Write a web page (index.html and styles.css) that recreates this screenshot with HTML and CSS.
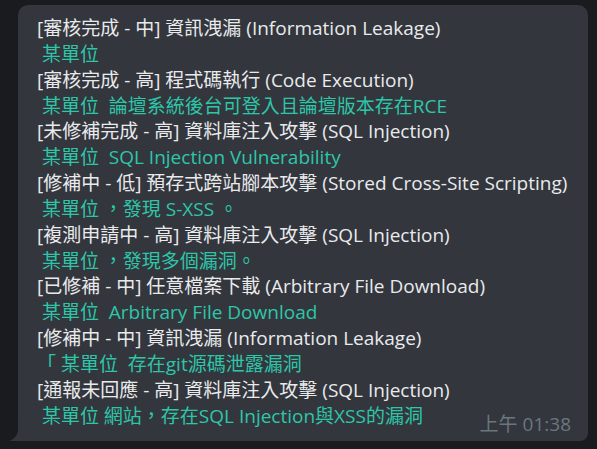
FILE: index.html
```html
<!DOCTYPE html>
<html lang="zh-Hant">
<head>
<meta charset="utf-8">
<link rel="stylesheet" href="styles.css">
</head>
<body>
<div class="chat">
  <div class="bubble">
    <div class="line">[審核完成 - 中] 資訊洩漏 (Information Leakage)</div>
    <div class="line org"> 某單位</div>
    <div class="line">[審核完成 - 高] 程式碼執行 (Code Execution)</div>
    <div class="line org"> 某單位  論壇系統後台可登入且論壇版本存在RCE</div>
    <div class="line">[未修補完成 - 高] 資料庫注入攻擊 (SQL Injection)</div>
    <div class="line org"> 某單位  SQL Injection Vulnerability</div>
    <div class="line">[修補中 - 低] 預存式跨站腳本攻擊 (Stored Cross-Site Scripting)</div>
    <div class="line org"> 某單位 ，發現 S-XSS 。</div>
    <div class="line">[複測申請中 - 高] 資料庫注入攻擊 (SQL Injection)</div>
    <div class="line org"> 某單位 ，發現多個漏洞。</div>
    <div class="line">[已修補 - 中] 任意檔案下載 (Arbitrary File Download)</div>
    <div class="line org"> 某單位  Arbitrary File Download</div>
    <div class="line">[修補中 - 中] 資訊洩漏 (Information Leakage)</div>
    <div class="line org">「 某單位  存在git源碼泄露漏洞</div>
    <div class="line">[通報未回應 - 高] 資料庫注入攻擊 (SQL Injection)</div>
    <div class="last">
      <div class="line org last-text"> 某單位 網站，存在SQL Injection與XSS的漏洞</div>
      <span class="time">上午 01:38</span>
    </div>
    <svg class="tail" width="10" height="18" viewBox="0 0 10 18"><path d="M10 0 Q10 15 0 18 L10 18 Z" fill="#33363d"/></svg>
  </div>
</div>
</body>
</html>
```
FILE: styles.css
```css
html, body {
  margin: 0;
  padding: 0;
  background: #1a1b1e;
}
body {
  font-family: "Open Sans", "Noto Sans CJK TC", sans-serif;
  font-size: 19px;
  color: #e9eaec;
}
.chat {
  padding: 5px 9px 0 18px;
}
.bubble {
  position: relative;
  width: 570px;
  box-sizing: border-box;
  background: #33363d;
  border-radius: 10px 10px 8px 0;
  padding: 11px 17px 4px 19px;
}
.line {
  line-height: 25.85px;
  height: 25.85px;
  white-space: pre;
}
.org {
  color: #2ec6a9;
}
.last {
  display: flex;
  justify-content: space-between;
  align-items: flex-end;
}
.last-text {
  margin-bottom: 7px;
}
.time {
  color: #6b777e;
  line-height: 25px;
}
.tail {
  position: absolute;
  left: -9px;
  bottom: 0;
  display: block;
}
```
